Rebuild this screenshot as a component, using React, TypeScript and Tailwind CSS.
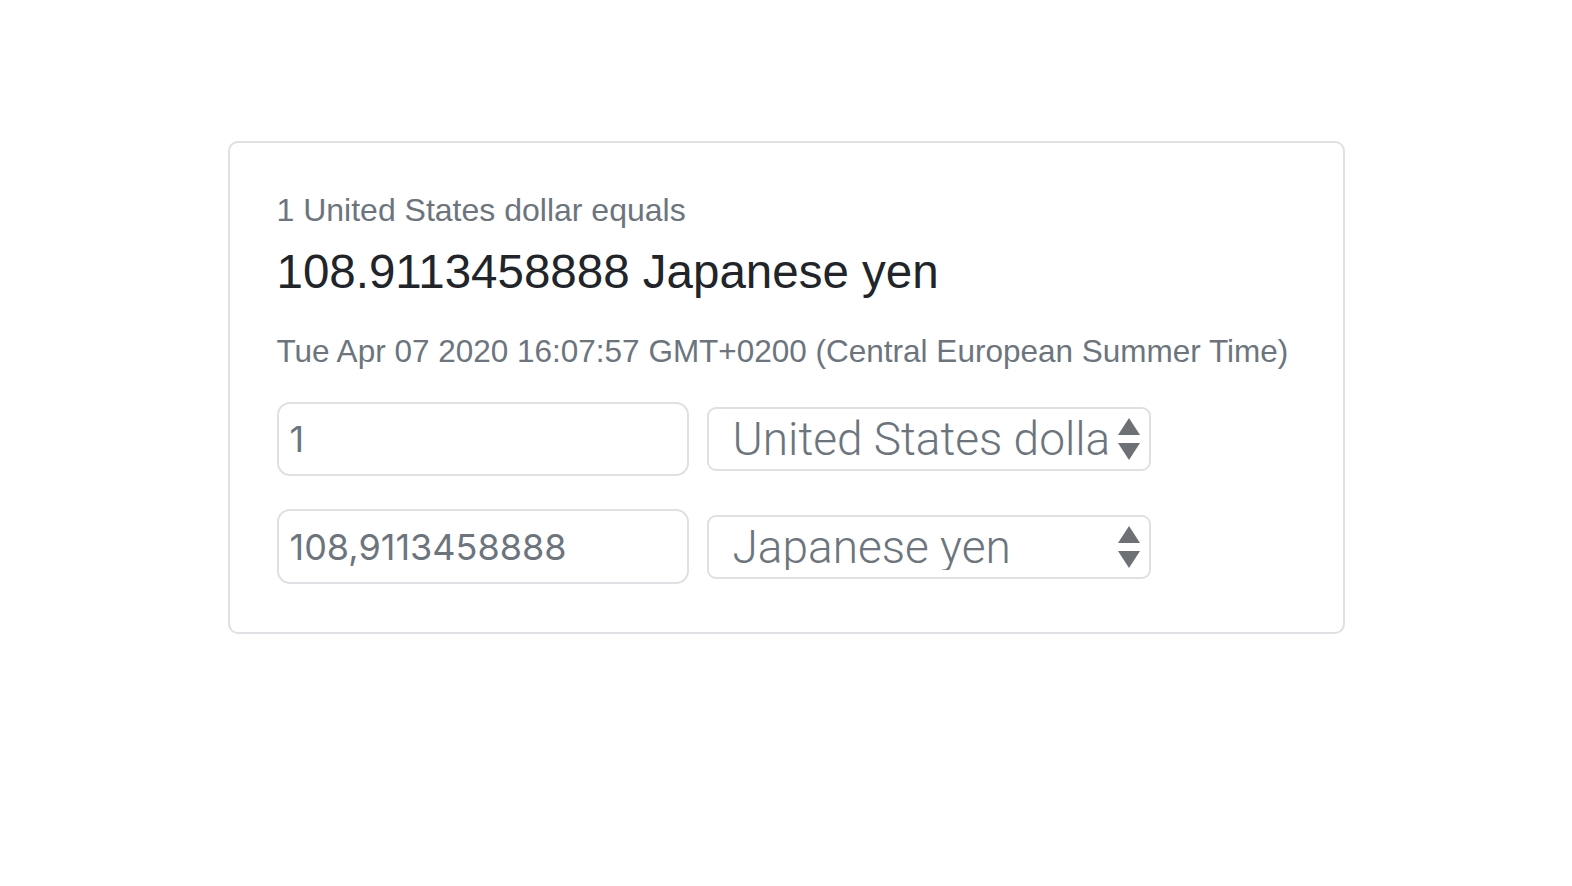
import { useState } from 'react';

const SelectArrows = () => (
  <svg width="22" height="42" viewBox="0 0 22 42" className="shrink-0 ml-[8px] mr-[9px]">
    <polygon points="11,0 22,17 0,17" fill="#6d7075" />
    <polygon points="0,25 22,25 11,42" fill="#6d7075" />
  </svg>
);

const FakeSelect = ({ label }: { label: string }) => (
  <div className="flex items-center w-[444px] h-[64px] border-2 border-[#dfe0e3] rounded-[9px] bg-white pl-[24px]">
    <span
      className="flex-1 overflow-hidden whitespace-nowrap text-[46px] font-light text-[#6c757d] leading-none"
      style={{ fontFamily: 'Roboto, "Liberation Sans", sans-serif' }}
    >
      {label}
    </span>
    <SelectArrows />
  </div>
);

export default function App() {
  const [amount, setAmount] = useState('1');
  const rate = 108.9113458888;
  const converted = '108,9113458888';

  return (
    <div
      className="min-h-screen bg-white pt-[141px]"
      style={{ fontFamily: '"Liberation Sans", Arial, sans-serif' }}
    >
      <div className="mx-auto w-[1117px] border-2 border-[#dfe0e3] rounded-[10px] pt-[43px] pb-[48px] pl-[47px] pr-[47px]">
        <p className="text-[32px] leading-[48px] text-[#6c757d]">1 United States dollar equals</p>
        <p className="mt-[9px] text-[47.5px] leading-[58px] text-[#212529]">
          {rate} Japanese yen
        </p>
        <p className="mt-[26px] text-[31.5px] leading-[48px] text-[#6c757d]">
          Tue Apr 07 2020 16:07:57 GMT+0200 (Central European Summer Time)
        </p>

        <div className="mt-[27px] flex items-center gap-[18px]">
          <input
            value={amount}
            onChange={(e) => setAmount(e.target.value)}
            className="w-[412px] h-[74px] border-2 border-[#dfe0e3] rounded-[13px] px-[11px] text-[36px] text-[#6c757d] outline-none"
            style={{ fontFamily: 'Inter, "Liberation Sans", sans-serif' }}
          />
          <FakeSelect label="United States dollar" />
        </div>

        <div className="mt-[33px] flex items-center gap-[18px]">
          <input
            value={converted}
            readOnly
            className="w-[412px] h-[75px] border-2 border-[#dfe0e3] rounded-[13px] px-[11px] text-[36px] text-[#6c757d] outline-none"
            style={{ fontFamily: 'Inter, "Liberation Sans", sans-serif' }}
          />
          <FakeSelect label="Japanese yen" />
        </div>
      </div>
    </div>
  );
}
